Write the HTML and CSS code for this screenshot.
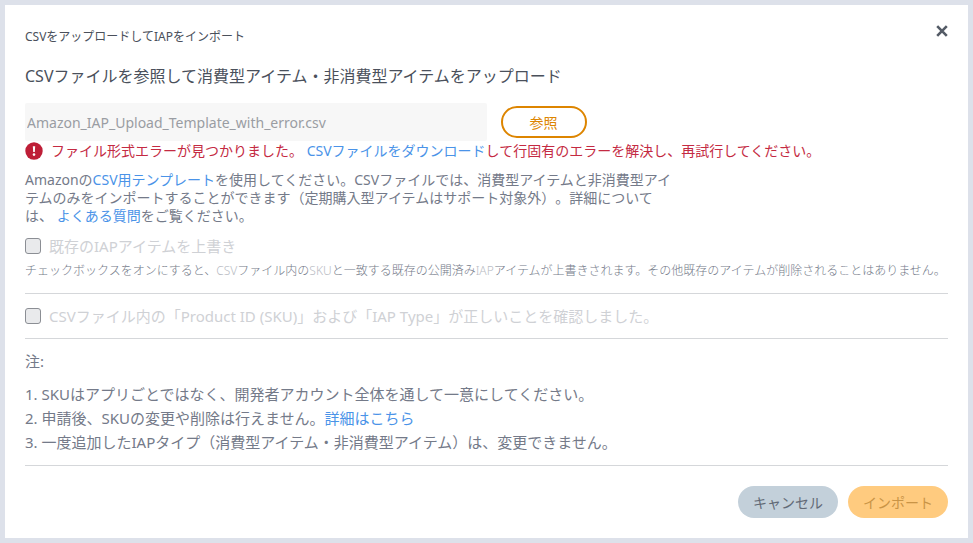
FILE: index.html
```html
<!DOCTYPE html>
<html lang="ja">
<head>
    <meta charset="UTF-8">
    <meta name="viewport" content="width=device-width, initial-scale=1">
    <title>IAPをインポート</title>
    <link rel="stylesheet" href="styles.css">
</head>
<body>
    <div class="modal" role="dialog" aria-labelledby="modal-title">
        <div class="modal-header">
            <h1 class="modal-title" id="modal-title">CSVをアップロードしてIAPをインポート</h1>
            <button class="close" type="button" aria-label="閉じる">
                <svg width="12" height="12" viewBox="0 0 12 12"><path d="M1.2 1.2L10.8 10.8M10.8 1.2L1.2 10.8" stroke="#545b66" stroke-width="2.6" fill="none"/></svg>
            </button>
        </div>

        <h2 class="heading"><label for="csv-file">CSVファイルを参照して消費型アイテム・非消費型アイテムをアップロード</label></h2>
        <div class="file-row">
            <input class="file-name" id="csv-file" type="text" value="Amazon_IAP_Upload_Template_with_error.csv" readonly>
            <button class="btn btn-browse" type="button">参照</button>
        </div>
        <div class="error">
            <svg class="error-icon" width="18" height="18" viewBox="0 0 18 18"><circle cx="9" cy="9" r="8.7" fill="#be1e37"/><path d="M7.8 4.3h2.4l-.4 5.8H8.2z" fill="#fff"/><circle cx="9" cy="12.6" r="1.3" fill="#fff"/></svg>
            <p class="error-text">ファイル形式エラーが見つかりました。 <a href="#">CSVファイルをダウンロード</a>して行固有のエラーを解決し、再試行してください。</p>
        </div>
        <p class="help">Amazonの<a href="#">CSV用テンプレート</a>を使用してください。CSVファイルでは、消費型アイテムと非消費型アイテムのみをインポートすることができます（定期購入型アイテムはサポート対象外）。詳細については、 <a href="#">よくある質問</a>をご覧ください。</p>

        <div class="check">
            <input type="checkbox" id="overwrite" disabled>
            <label for="overwrite">既存のIAPアイテムを上書き</label>
        </div>
        <p class="check-note">チェックボックスをオンにすると、<span class="latin">CSV</span>ファイル内の<span class="latin">SKU</span>と一致する既存の公開済み<span class="latin">IAP</span>アイテムが上書きされます。その他既存のアイテムが削除されることはありません。</p>
        <hr>
        <div class="check">
            <input type="checkbox" id="confirm" disabled>
            <label for="confirm">CSVファイル内の「Product ID (SKU)」および「IAP Type」が正しいことを確認しました。</label>
        </div>
        <hr>
        <p class="note-title">注:</p>
        <ol class="notes">
            <li>SKUはアプリごとではなく、開発者アカウント全体を通して一意にしてください。</li>
            <li>申請後、SKUの変更や削除は行えません。<a href="#">詳細はこちら</a></li>
            <li>一度追加したIAPタイプ（消費型アイテム・非消費型アイテム）は、変更できません。</li>
        </ol>
        <hr>
        <div class="modal-footer">
            <button class="btn btn-cancel" type="button">キャンセル</button>
            <button class="btn btn-import" type="button" disabled>インポート</button>
        </div>
    </div>
</body>
</html>
```
FILE: styles.css
```css
* {
    box-sizing: border-box;
}
body {
    margin: 0;
    padding: 5px;
    background-color: #dde1ea;
    font-family: 'Noto Sans', 'Noto Sans CJK JP', sans-serif;
    font-size: 14px;
    color: #747a89;
    text-spacing-trim: space-all;
}
h1, h2, p, ol {
    margin: 0;
    font-weight: normal;
}
a {
    color: #4a93e8;
    text-decoration: none;
}
button, input {
    font-family: inherit;
}
hr {
    height: 1px;
    margin: 11px 0;
    border: none;
    background-color: #d5d7da;
}
.modal {
    padding: 20px;
    background-color: #ffffff;
}
.modal-header {
    display: flex;
    justify-content: space-between;
    align-items: flex-start;
}
.modal-title {
    padding-top: 2px;
    font-size: 12px;
    line-height: 20px;
    color: #4a505b;
}
.close {
    display: flex;
    padding: 0;
    border: none;
    background: none;
    cursor: pointer;
}
.heading {
    margin-top: 17px;
    font-size: 16px;
    line-height: 24px;
    color: #4a505b;
}
.file-row {
    display: flex;
    align-items: center;
    gap: 14px;
    margin-top: 15px;
}
.file-name {
    width: 50%;
    height: 38px;
    padding: 0 2px;
    border: none;
    border-radius: 2px;
    background-color: #f7f7f7;
    font-size: 14px;
    color: #9a9da3;
}
.btn {
    height: 32px;
    padding: 0;
    border: none;
    border-radius: 16px;
    font-size: 14px;
    cursor: pointer;
}
.btn-browse {
    width: 86px;
    border: 2px solid #dd8500;
    background-color: #ffffff;
    color: #dd8500;
}
.error {
    display: flex;
    align-items: center;
    gap: 8px;
    color: #c42a42;
}
.error-icon {
    flex-shrink: 0;
}
.error-text {
    line-height: 20px;
}
.help {
    max-width: 652px;
    margin-top: 10px;
    line-height: 18px;
}
.check {
    display: flex;
    align-items: center;
    gap: 8px;
    margin-top: 10px;
    font-size: 15px;
    line-height: 22px;
    color: #cfd1d5;
}
.check input {
    appearance: none;
    width: 16px;
    height: 16px;
    margin: 0;
    border: 1px solid #8b8e94;
    border-radius: 3px;
    background-color: #e9eaec;
}
.check-note {
    margin: 5px 0 13px;
    font-size: 12px;
    line-height: 18px;
    font-weight: 300;
}
.latin {
    color: #b9bcc4;
}
.note-title {
    font-size: 15px;
    line-height: 22px;
}
.notes {
    margin-top: 10px;
    padding: 0;
    list-style-position: inside;
    font-size: 15px;
    line-height: 24px;
}
.modal-footer {
    display: flex;
    justify-content: flex-end;
    gap: 10px;
    margin-top: 20px;
}
.btn-cancel {
    width: 100px;
    background-color: #c3d0da;
    color: #626a76;
}
.btn-import {
    width: 100px;
    background-color: #ffcb7f;
    color: #c99446;
}
```
